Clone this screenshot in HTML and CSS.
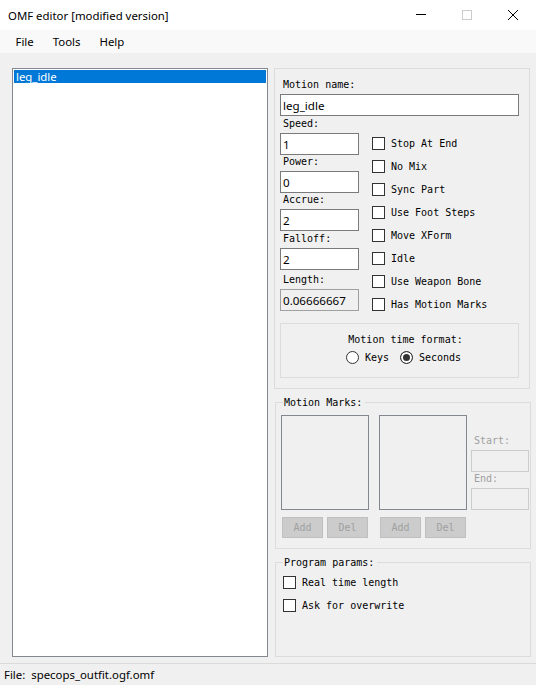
FILE: index.html
```html
<!DOCTYPE html>
<html>
<head>
<meta charset="utf-8">
<title>OMF editor</title>
<link rel="stylesheet" href="styles.css">
</head>
<body>
<div class="window">
  <header class="titlebar">
    <span class="title">OMF editor [modified version]</span>
    <div class="caption-btn"><svg width="10" height="10" viewBox="0 0 10 10"><path d="M0 4.5H10" stroke="#000" stroke-width="1"/></svg></div>
    <div class="caption-btn"><svg width="10" height="10" viewBox="0 0 10 10"><rect x="0.5" y="0.5" width="9" height="9" fill="none" stroke="#cccccc"/></svg></div>
    <div class="caption-btn"><svg width="10" height="10" viewBox="0 0 10 10"><path d="M0 0L10 10M10 0L0 10" stroke="#000" stroke-width="1"/></svg></div>
  </header>
  <nav class="menubar">
    <span class="menu-item">File</span>
    <span class="menu-item">Tools</span>
    <span class="menu-item">Help</span>
  </nav>
  <main class="client">
    <div class="listbox">
      <div class="list-item selected">leg_idle</div>
    </div>
    <div class="side">
      <section class="group props">
        <label class="field-label mono">Motion name:</label>
        <div class="textbox">leg_idle</div>
        <div class="fields-row">
          <div class="fields-col">
            <label class="field-label mono first">Speed:</label>
            <div class="textbox">1</div>
            <label class="field-label mono">Power:</label>
            <div class="textbox">0</div>
            <label class="field-label mono">Accrue:</label>
            <div class="textbox">2</div>
            <label class="field-label mono gap1">Falloff:</label>
            <div class="textbox">2</div>
            <label class="field-label mono gap3">Length:</label>
            <div class="textbox readonly">0.06666667</div>
          </div>
          <div class="checks-col">
            <div class="check-row mono"><span class="checkbox"></span>Stop At End</div>
            <div class="check-row mono"><span class="checkbox"></span>No Mix</div>
            <div class="check-row mono"><span class="checkbox"></span>Sync Part</div>
            <div class="check-row mono"><span class="checkbox"></span>Use Foot Steps</div>
            <div class="check-row mono"><span class="checkbox"></span>Move XForm</div>
            <div class="check-row mono"><span class="checkbox"></span>Idle</div>
            <div class="check-row mono"><span class="checkbox"></span>Use Weapon Bone</div>
            <div class="check-row mono"><span class="checkbox"></span>Has Motion Marks</div>
          </div>
        </div>
        <div class="time-box mono">
          <div class="time-title">Motion time format:</div>
          <div class="radio-row">
            <span class="radio"></span><span class="radio-label">Keys</span>
            <span class="radio checked"></span><span class="radio-label">Seconds</span>
          </div>
        </div>
      </section>
      <fieldset class="group marks">
        <legend class="mono">Motion Marks:</legend>
        <div class="marks-row">
          <div class="marks-col">
            <div class="mini-list"></div>
            <div class="btn-row">
              <span class="btn mono">Add</span><span class="btn mono">Del</span>
            </div>
          </div>
          <div class="marks-col">
            <div class="mini-list"></div>
            <div class="btn-row">
              <span class="btn mono">Add</span><span class="btn mono">Del</span>
            </div>
          </div>
          <div class="range-col">
            <label class="field-label mono disabled">Start:</label>
            <div class="textbox disabled-box"></div>
            <label class="field-label mono disabled">End:</label>
            <div class="textbox disabled-box"></div>
          </div>
        </div>
      </fieldset>
      <fieldset class="group params">
        <legend class="mono">Program params:</legend>
        <div class="check-row mono"><span class="checkbox"></span>Real time length</div>
        <div class="check-row mono"><span class="checkbox"></span>Ask for overwrite</div>
      </fieldset>
    </div>
  </main>
  <footer class="status">File:  specops_outfit.ogf.omf</footer>
</div>
</body>
</html>
```
FILE: styles.css
```css
* { box-sizing: border-box; }
html, body { margin: 0; padding: 0; }
body {
  width: 536px;
  height: 685px;
  overflow: hidden;
  background: #f0f0f0;
  font-family: "Noto Sans", "Open Sans", sans-serif;
  font-size: 11.4px;
  color: #000;
}
.window { display: flex; flex-direction: column; height: 685px; }

.titlebar { height: 30px; background: #fff; display: flex; align-items: center; }
.title { flex: 1; padding-left: 8px; }
.caption-btn { width: 46px; height: 30px; display: flex; align-items: center; justify-content: center; }
.caption-btn svg { display: block; margin-top: -1px; }

.menubar { height: 23px; background: #f9f9f9; display: flex; align-items: center; padding-left: 6px; }
.menu-item { padding: 0 9.5px; }

.client { flex: 1; display: flex; gap: 6px; padding: 15px 0 6px 12px; }
.listbox { width: 256px; border: 1px solid #828790; background: #fff; padding: 1px; }
.list-item { height: 13px; line-height: 13px; padding-left: 2px; }
.list-item.selected { background: #0078d7; color: #fff; }

.side { width: 257px; display: flex; flex-direction: column; }
.mono { font-family: "DejaVu Sans Mono", "Liberation Mono", monospace; font-size: 10px; line-height: 13px; color: #000; }

.group { border: 1px solid #dcdcdc; }
.props { width: 256px; padding: 9px 10px 10px 5px; }

.field-label { display: block; height: 13px; margin-bottom: 3px; padding-left: 3px; white-space: nowrap; }
.field-label.first { margin-top: 1px; }
.field-label.gap1 { margin-top: 1px; }
.field-label.gap3 { margin-top: 3px; }

.textbox {
  height: 22px;
  border: 1px solid #7a7a7a;
  background: #fff;
  padding-left: 2px;
  display: flex;
  align-items: center;
  font-size: 11.6px;
}
.textbox.readonly { background: #f0f0f0; border-color: #a0a0a0; }
.textbox.disabled-box { background: #f0f0f0; border-color: #cccccc; }

.fields-row { display: flex; }
.fields-col { width: 79px; display: flex; flex-direction: column; }
.checks-col { margin-left: 13px; padding-top: 21px; display: flex; flex-direction: column; gap: 10px; }

.check-row { display: flex; align-items: center; gap: 6px; height: 13px; white-space: nowrap; }
.checkbox { width: 13px; height: 13px; border: 1px solid #333; background: #fff; flex: none; }

.time-box {
  margin-top: 12px;
  height: 55px;
  border: 1px solid #dcdcdc;
  padding-top: 9px;
  display: flex;
  flex-direction: column;
  align-items: center;
}
.time-title { height: 13px; padding-left: 12px; }
.radio-row { margin-top: 5px; height: 13px; display: flex; align-items: center; padding-left: 8px; }
.radio { width: 13px; height: 13px; border: 1px solid #333; border-radius: 50%; background: #fff; flex: none; }
.radio.checked { background: #333; box-shadow: inset 0 0 0 2px #fff; }
.radio-label { margin-left: 6px; margin-right: 11px; }
.radio-label:last-child { margin-right: 0; }

fieldset.group { margin: 7px 0 0 1px; width: 256px; min-width: 0; }
fieldset.group legend { padding: 0 3px 0 1px; margin-left: 2px; }
.marks { padding: 6px 1px 10px 5px; }
.marks-row { display: flex; }
.marks-col { width: 88px; display: flex; flex-direction: column; margin-right: 10px; }
.marks-col + .marks-col { margin-right: 4px; }
.mini-list { height: 95px; border: 1px solid #828790; background: #f0f0f0; }
.btn-row { display: flex; gap: 4px; padding-left: 1px; margin-top: 7px; }
.btn {
  width: 41px;
  height: 21px;
  background: #cccccc;
  border: 1px solid #bfbfbf;
  color: #a0a0a0;
  display: flex;
  align-items: center;
  justify-content: center;
}
.range-col { width: 58px; display: flex; flex-direction: column; justify-content: flex-end; padding-bottom: 28px; }
.field-label.disabled { color: #a0a0a0; }

.params { flex: 1; padding: 7px 0 0 5px; display: flex; flex-direction: column; gap: 10px; }
.params .check-row { padding-left: 2px; }

.status {
  height: 22px;
  border-top: 1px solid #dadada;
  padding-left: 4px;
  display: flex;
  align-items: center;
  white-space: pre;
}
```
